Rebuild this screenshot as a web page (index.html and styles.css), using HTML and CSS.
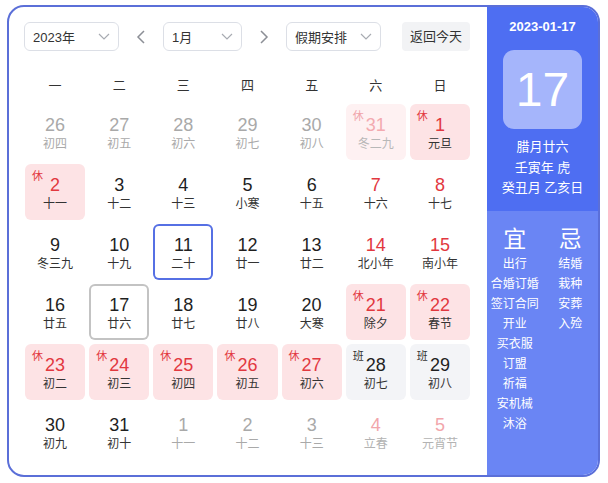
FILE: index.html
```html
<!DOCTYPE html>
<html lang="zh-CN">
<head>
<meta charset="utf-8">
<title>万年历</title>
<link rel="stylesheet" href="styles.css">
</head>
<body>
<div class="cal">
  <div class="main">
    <div class="toolbar">
      <div class="select sel-year"><span>2023年</span><svg class="chev" width="12" height="7" viewBox="0 0 12 7"><path d="M1 1L6 6L11 1"/></svg></div>
      <div class="arrow"><svg width="10" height="14" viewBox="0 0 10 14"><path d="M8 1L2 7L8 13"/></svg></div>
      <div class="select sel-month"><span>1月</span><svg class="chev" width="12" height="7" viewBox="0 0 12 7"><path d="M1 1L6 6L11 1"/></svg></div>
      <div class="arrow"><svg width="10" height="14" viewBox="0 0 10 14"><path d="M2 1L8 7L2 13"/></svg></div>
      <div class="select sel-holiday"><span>假期安排</span><svg class="chev" width="12" height="7" viewBox="0 0 12 7"><path d="M1 1L6 6L11 1"/></svg></div>
      <div class="today-btn">返回今天</div>
    </div>
    <div class="week">
      <span>一</span><span>二</span><span>三</span><span>四</span><span>五</span><span>六</span><span>日</span>
    </div>
    <div class="days">
      <div class="day other"><b>26</b><i>初四</i></div>
      <div class="day other"><b>27</b><i>初五</i></div>
      <div class="day other"><b>28</b><i>初六</i></div>
      <div class="day other"><b>29</b><i>初七</i></div>
      <div class="day other"><b>30</b><i>初八</i></div>
      <div class="day other rest"><em>休</em><b>31</b><i>冬二九</i></div>
      <div class="day rest"><em>休</em><b>1</b><i>元旦</i></div>

      <div class="day rest"><em>休</em><b>2</b><i>十一</i></div>
      <div class="day"><b>3</b><i>十二</i></div>
      <div class="day"><b>4</b><i>十三</i></div>
      <div class="day"><b>5</b><i>小寒</i></div>
      <div class="day"><b>6</b><i>十五</i></div>
      <div class="day weekend"><b>7</b><i>十六</i></div>
      <div class="day weekend"><b>8</b><i>十七</i></div>

      <div class="day"><b>9</b><i>冬三九</i></div>
      <div class="day"><b>10</b><i>十九</i></div>
      <div class="day hover"><b>11</b><i>二十</i></div>
      <div class="day"><b>12</b><i>廿一</i></div>
      <div class="day"><b>13</b><i>廿二</i></div>
      <div class="day weekend"><b>14</b><i>北小年</i></div>
      <div class="day weekend"><b>15</b><i>南小年</i></div>

      <div class="day"><b>16</b><i>廿五</i></div>
      <div class="day today"><b>17</b><i>廿六</i></div>
      <div class="day"><b>18</b><i>廿七</i></div>
      <div class="day"><b>19</b><i>廿八</i></div>
      <div class="day"><b>20</b><i>大寒</i></div>
      <div class="day rest"><em>休</em><b>21</b><i>除夕</i></div>
      <div class="day rest"><em>休</em><b>22</b><i>春节</i></div>

      <div class="day rest"><em>休</em><b>23</b><i>初二</i></div>
      <div class="day rest"><em>休</em><b>24</b><i>初三</i></div>
      <div class="day rest"><em>休</em><b>25</b><i>初四</i></div>
      <div class="day rest"><em>休</em><b>26</b><i>初五</i></div>
      <div class="day rest"><em>休</em><b>27</b><i>初六</i></div>
      <div class="day work"><em>班</em><b>28</b><i>初七</i></div>
      <div class="day work"><em>班</em><b>29</b><i>初八</i></div>

      <div class="day"><b>30</b><i>初九</i></div>
      <div class="day"><b>31</b><i>初十</i></div>
      <div class="day other"><b>1</b><i>十一</i></div>
      <div class="day other"><b>2</b><i>十二</i></div>
      <div class="day other"><b>3</b><i>十三</i></div>
      <div class="day other weekend"><b>4</b><i>立春</i></div>
      <div class="day other weekend"><b>5</b><i>元宵节</i></div>
    </div>
  </div>
  <aside class="panel">
    <div class="panel-top">
      <div class="p-date">2023-01-17</div>
      <div class="p-big">17</div>
      <div class="p-lunar">
        <div>腊月廿六</div>
        <div>壬寅年 虎</div>
        <div>癸丑月 乙亥日</div>
      </div>
    </div>
    <div class="panel-bottom">
      <div class="yj">
        <div class="yj-title">宜</div>
        <div>出行</div><div>合婚订婚</div><div>签订合同</div><div>开业</div><div>买衣服</div><div>订盟</div><div>祈福</div><div>安机械</div><div>沐浴</div>
      </div>
      <div class="yj">
        <div class="yj-title">忌</div>
        <div>结婚</div><div>栽种</div><div>安葬</div><div>入殓</div>
      </div>
    </div>
  </aside>
</div>
</body>
</html>
```

FILE: styles.css
```css
* { box-sizing: border-box; }
html, body { margin: 0; padding: 0; background: #fff; }
body {
  font-family: "Liberation Sans", "Noto Sans CJK SC", sans-serif;
  color: #222;
}
.cal {
  margin: 5px 0 0 7px;
  width: 593px;
  height: 472px;
  border: 2px solid #5b6fd8;
  border-radius: 17px;
  overflow: hidden;
  display: flex;
  background: #fff;
}
.main {
  flex: 1;
  padding: 15px 17px 0 15px;
}
.toolbar {
  display: flex;
  align-items: center;
  height: 29px;
}
.select {
  height: 29px;
  border: 1px solid #dcdfe6;
  border-radius: 6px;
  display: flex;
  align-items: center;
  justify-content: space-between;
  padding: 0 8px 0 8px;
  font-size: 13px;
  color: #333;
}
.sel-year { width: 95px; }
.sel-month { width: 79px; }
.sel-holiday { width: 95px; }
.chev path { fill: none; stroke: #a8abb2; stroke-width: 1.2; }
.arrow {
  width: 24px;
  margin: 0 10px;
  display: flex;
  justify-content: center;
  align-items: center;
}
.arrow path { fill: none; stroke: #8c8f96; stroke-width: 1.5; }
.today-btn {
  margin-left: 21px;
  height: 29px;
  padding: 0 8px;
  background: #f2f3f5;
  border-radius: 4px;
  font-size: 13px;
  line-height: 29px;
  color: #333;
}
.week {
  display: grid;
  grid-template-columns: repeat(7, 1fr);
  gap: 4px;
  margin-top: 21px;
  height: 28px;
  margin-left: 1px;
}
.week span {
  text-align: center;
  line-height: 28px;
  font-size: 13px;
  color: #333;
}
.days {
  margin-top: 4px;
  margin-left: 1px;
  display: grid;
  grid-template-columns: repeat(7, 1fr);
  grid-auto-rows: 56px;
  gap: 4px;
}
.day {
  position: relative;
  border-radius: 6px;
  display: flex;
  flex-direction: column;
  align-items: center;
  padding-top: 10px;
}
.day b {
  font-weight: normal;
  font-size: 18px;
  line-height: 22px;
  color: #1f1f1f;
}
.day i {
  font-style: normal;
  font-size: 12px;
  line-height: 16px;
  color: #333;
}
.day em {
  position: absolute;
  top: 6px;
  left: 7px;
  font-style: normal;
  font-size: 11px;
  line-height: 12px;
  color: #e2383f;
}
.day.weekend b { color: #e2383f; }
.day.rest { background: #fde3e5; }
.day.rest b { color: #e2383f; }
.day.work { background: #f3f4f7; }
.day.work em { color: #333; }
.day.other b, .day.other i { color: #a9a9a9; }
.day.other.weekend b { color: #f2a6ab; }
.day.other.weekend i { color: #b3b3b3; }
.day.other.rest { background: #fef1f2; }
.day.other.rest b { color: #f3aab0; }
.day.other.rest em { color: #f0a4aa; }
.day.other.rest i { color: #b8b8b8; }
.day.today { box-shadow: inset 0 0 0 2px #c3c3c3; }
.day.hover { box-shadow: inset 0 0 0 2px #5670e4; }

.panel {
  width: 111px;
  display: flex;
  flex-direction: column;
  color: #fff;
}
.panel-top {
  background: #4e6ef2;
  padding: 10px 0 12px;
  display: flex;
  flex-direction: column;
  align-items: center;
}
.p-date {
  font-size: 13px;
  line-height: 20px;
  font-weight: bold;
}
.p-big {
  margin-top: 13px;
  width: 79px;
  height: 79px;
  border-radius: 11px;
  background: #a5b5fb;
  font-size: 48px;
  line-height: 79px;
  text-align: center;
}
.p-lunar {
  margin-top: 8px;
  font-size: 13px;
  line-height: 20.5px;
  text-align: center;
}
.panel-bottom {
  flex: 1;
  background: #6a85f4;
  display: flex;
  padding-top: 13px;
}
.yj {
  flex: 1;
  text-align: center;
  font-size: 12px;
  line-height: 20px;
}
.yj-title {
  font-size: 23px;
  line-height: 30px;
}
```
